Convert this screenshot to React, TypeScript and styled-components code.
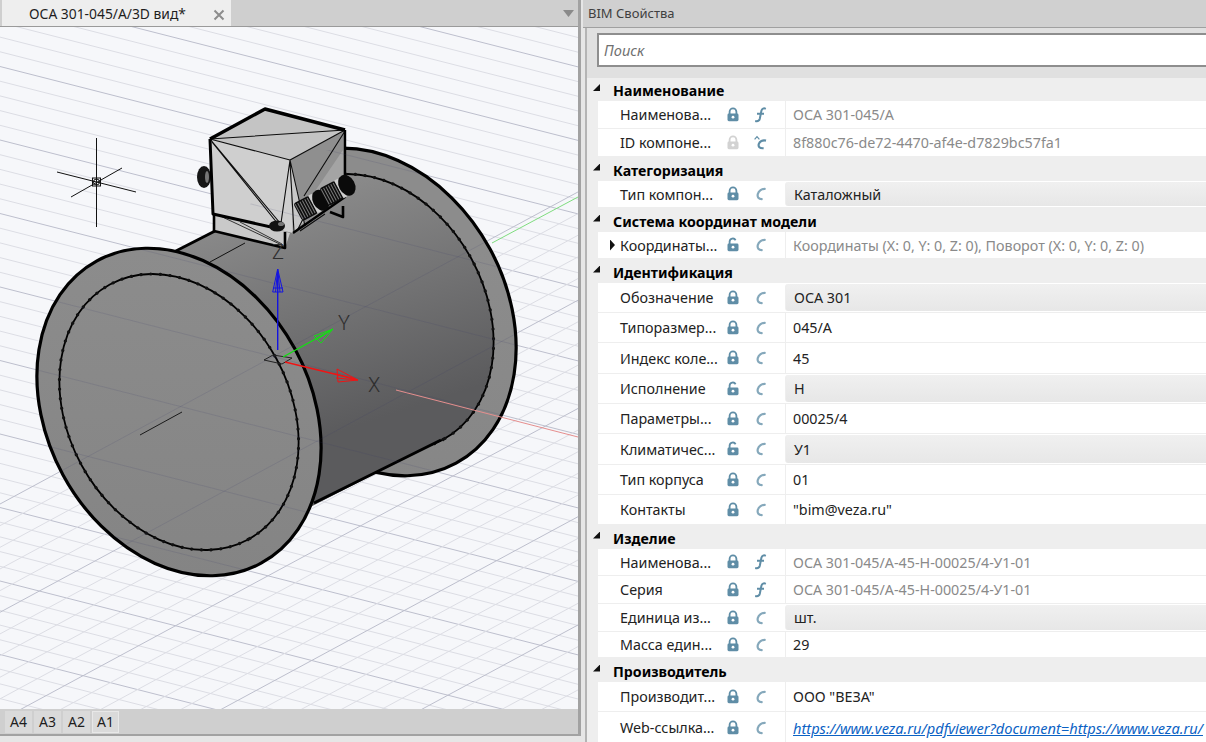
import React from 'react';
import styled, { createGlobalStyle } from 'styled-components';

const GlobalStyle = createGlobalStyle`
  html, body {
    margin: 0;
    padding: 0;
    background: #e6e6e6;
  }
  * { box-sizing: border-box; }
`;

const Screen = styled.div`
  width: 1206px;
  height: 742px;
  overflow: hidden;
  display: flex;
  background: #e6e6e6;
  font-family: "Noto Sans", "Open Sans", sans-serif;
  font-size: 14.3px;
  color: #1e1e1e;
`;

// left pane
const DrawingPane = styled.section`
  width: 581px;
  height: 736px;
  display: flex;
  flex-direction: column;
  flex-shrink: 0;
  border-right: 3px solid #a2a2a2;
  border-bottom: 2px solid #a2a2a2;
`;

const TabBar = styled.div`
  height: 27px;
  flex-shrink: 0;
  display: flex;
  align-items: stretch;
  justify-content: space-between;
  background: #cfcfcf;
  border-bottom: 1px solid #9a9a9a;
  padding: 0 4px 0 2px;
`;

const ActiveTab = styled.div`
  width: 229px;
  display: flex;
  align-items: center;
  justify-content: space-between;
  background: #eeeeee;
  padding: 0 6px 0 27px;
  font-size: 13.85px;
`;

const CloseIcon = styled.svg`
  width: 12px;
  height: 12px;
  margin-top: 3px;
  stroke: #8c8c8c;
  stroke-width: 2;
`;

const TabMenu = styled.span`
  align-self: center;
  width: 11px;
  height: 7px;
  background: #8a8a8a;
  clip-path: polygon(0 0, 100% 0, 50% 100%);
  margin-top: 1px;
`;

const Viewport = styled.div`
  flex: 1;
  min-height: 0;
  background: #f6f7fa;
  svg { display: block; }
`;

const SheetBar = styled.div`
  height: 25px;
  flex-shrink: 0;
  display: flex;
  align-items: center;
  gap: 2px;
  padding: 0 5px;
  background: #cfcfcf;
`;

const SheetTab = styled.div<{ $active?: boolean }>`
  width: 27px;
  height: 22px;
  display: flex;
  align-items: center;
  justify-content: center;
  background: #dadada;
  font-size: 14px;
  border: 1px solid ${p => (p.$active ? '#e8e8e8' : '#dadada')};
`;

// right pane
const PropsPane = styled.section`
  flex: 1;
  min-width: 0;
  display: flex;
  flex-direction: column;
  height: 742px;
  padding-left: 2px;
`;

const PropsTitle = styled.div`
  height: 28px;
  flex-shrink: 0;
  display: flex;
  align-items: center;
  padding: 0 0 2px 5px;
  background: #d0d0d0;
  border-bottom: 1px solid #a0a0a0;
  font-size: 13px;
  color: #404040;
`;

const PropsBody = styled.div`
  flex: 1;
  min-height: 0;
  overflow: hidden;
  background: #eeeeee;
  border-left: 2px solid #b4b4b4;
  margin-left: 2px;
`;

const SearchBar = styled.div`
  height: 50px;
  padding: 5px 0 0 10px;
  background: #e0e0e0;
`;

const SearchInput = styled.div`
  height: 34px;
  border: 2px solid #8e8e8e;
  border-right: none;
  background: #fff;
  display: flex;
  align-items: center;
  padding-left: 5px;
  font-style: italic;
  color: #707070;
  font-size: 14.6px;
`;

const GroupHead = styled.div<{ $h: number }>`
  height: ${p => p.$h}px;
  display: flex;
  align-items: center;
  padding: 2px 0 0 6px;
  font-weight: 700;
  font-size: 14.2px;
  color: #000;
  gap: 13px;
`;

const Collapse = styled.span`
  width: 7px;
  height: 7px;
  background: #111;
  clip-path: polygon(100% 0, 100% 100%, 0 100%);
  margin-top: -6px;
`;

const Row = styled.div<{ $h: number }>`
  height: ${p => p.$h}px;
  margin-left: 11px;
  display: flex;
  background: #fff;
  border-bottom: 1px solid #eeeeee;
`;

const NameCell = styled.div`
  width: 186px;
  flex-shrink: 0;
  display: grid;
  grid-template-columns: 22px 106px 27px 14px;
  align-items: center;
`;

const Expander = styled.span`
  justify-self: end;
  margin-right: 5px;
  width: 5px;
  height: 11px;
  background: #111;
  clip-path: polygon(0 0, 100% 50%, 0 100%);
`;

const Name = styled.span`
  white-space: nowrap;
  color: #222;
`;

const IconSvg = styled.svg`
  display: block;
  width: 14px;
  height: 16px;
`;

const ValueCell = styled.div<{ $combo?: boolean; $muted?: boolean }>`
  flex: 1;
  min-width: 0;
  margin-left: 1px;
  border-left: 1px solid #eeeeee;
  display: flex;
  align-items: center;
  white-space: nowrap;
  overflow: hidden;
  padding-left: ${p => (p.$combo ? '8px' : '7px')};
  color: ${p => (p.$muted ? '#8a8a8a' : '#222')};
  ${p =>
    p.$combo &&
    `
    margin-top: 1px;
    margin-bottom: 1px;
    border-radius: 3px 0 0 3px;
    background: linear-gradient(180deg, #f0f0f0 0%, #e7e7e7 100%);
  `}
`;

const WebLink = styled.a`
  color: #0b62c4;
  font-style: italic;
  font-size: 14.6px;
  text-decoration: underline;
`;

const LockIcon = ({ open, faded }: { open?: boolean; faded?: boolean }) => (
  <IconSvg viewBox="0 0 14 16">
    <path
      d={open ? 'M3.6 7V4.6a3.2 3.2 0 0 1 6-1.4' : 'M3.6 7V4.8a3.4 3.4 0 0 1 6.8 0V7'}
      fill="none"
      stroke={faded ? '#d2d2d2' : '#5f8da6'}
      strokeWidth="1.8"
    />
    <rect x="1.5" y="6.6" width="11" height="7.6" rx="1.4" fill={faded ? '#d2d2d2' : '#5f8da6'} />
    <circle cx="7" cy="10.2" r="1.4" fill="#fff" />
  </IconSvg>
);

const ValueKindIcon = ({ kind }: { kind: 'f' | 'c' | 'hat' }) => {
  if (kind === 'f') {
    return (
      <IconSvg viewBox="0 0 14 16">
        <path
          d="M12.8 1.8c-2-1-3.8-.3-4.4 2L6.8 11.8c-.5 2-1.8 2.8-4.6 2.2M4 6.8h7"
          fill="none"
          stroke="#5f8da6"
          strokeWidth="2"
        />
      </IconSvg>
    );
  }
  return (
    <IconSvg viewBox="0 0 14 16">
      <path
        d={
          kind === 'hat'
            ? 'M13 5.6C9.6 4.6 6.6 6.4 5.8 9c-.7 2.6.6 4.6 4.8 4.2'
            : 'M12.6 3C8.8 2.4 5.6 4.8 4.8 8c-.7 3 .6 5.4 4.8 5'
        }
        fill="none"
        stroke={kind === 'hat' ? '#5f8da6' : '#85a8bb'}
        strokeWidth="2.2"
      />
      {kind === 'hat' && <path d="M1.6 4.4 4 1.6 6.4 4.4" fill="none" stroke="#5f8da6" strokeWidth="1.2" />}
    </IconSvg>
  );
};

type Prop = {
  name: string;
  value: string;
  h: number;
  kind?: 'f' | 'c' | 'hat';
  combo?: boolean;
  muted?: boolean;
  open?: boolean;
  faded?: boolean;
  expand?: boolean;
  link?: boolean;
};

type Group = { title: string; h: number; rows: Prop[] };

const groups: Group[] = [
  {
    title: 'Наименование',
    h: 23,
    rows: [
      { name: 'Наименова...', value: 'ОСА 301-045/А', h: 28, kind: 'f', muted: true },
      { name: 'ID компоне...', value: '8f880c76-de72-4470-af4e-d7829bc57fa1', h: 28, kind: 'hat', muted: true, faded: true },
    ],
  },
  {
    title: 'Категоризация',
    h: 24,
    rows: [{ name: 'Тип компон...', value: 'Каталожный', h: 27, combo: true }],
  },
  {
    title: 'Система координат модели',
    h: 24,
    rows: [
      {
        name: 'Координаты...',
        value: 'Координаты (X: 0, Y: 0, Z: 0), Поворот (X: 0, Y: 0, Z: 0)',
        h: 27,
        muted: true,
        open: true,
        expand: true,
      },
    ],
  },
  {
    title: 'Идентификация',
    h: 24,
    rows: [
      { name: 'Обозначение', value: 'ОСА 301', h: 30, combo: true },
      { name: 'Типоразмер...', value: '045/А', h: 30 },
      { name: 'Индекс коле...', value: '45', h: 31 },
      { name: 'Исполнение', value: 'Н', h: 30, combo: true, open: true },
      { name: 'Параметры...', value: '00025/4', h: 30 },
      { name: 'Климатичес...', value: 'У1', h: 31, combo: true, open: true },
      { name: 'Тип корпуса', value: '01', h: 30 },
      { name: 'Контакты', value: '"bim@veza.ru"', h: 30 },
    ],
  },
  {
    title: 'Изделие',
    h: 24,
    rows: [
      { name: 'Наименова...', value: 'ОСА 301-045/А-45-Н-00025/4-У1-01', h: 27, kind: 'f', muted: true },
      { name: 'Серия', value: 'ОСА 301-045/А-45-Н-00025/4-У1-01', h: 28, kind: 'f', muted: true },
      { name: 'Единица из...', value: 'шт.', h: 28, combo: true },
      { name: 'Масса един...', value: '29', h: 26 },
    ],
  },
  {
    title: 'Производитель',
    h: 24,
    rows: [
      { name: 'Производит...', value: 'ООО "ВЕЗА"', h: 30 },
      {
        name: 'Web-ссылка...',
        value: 'https://www.veza.ru/pdfviewer?document=https://www.veza.ru/',
        h: 32,
        link: true,
      },
    ],
  },
];

// construction grid of the 3D view, in page pixels
const gridLines = (() => {
  const out: { x1: number; y1: number; x2: number; y2: number; major: boolean }[] = [];
  for (let i = -10; i <= 60; i++) {
    const y0 = 654.5 - 14.7 * i;
    out.push({ x1: 0, y1: y0, x2: 578, y2: y0 + 578 * 0.255, major: i % 5 === 0 });
  }
  for (let i = -10; i <= 50; i++) {
    const x0 = 19.5 + 40.1 * i;
    out.push({ x1: x0, y1: 710, x2: x0 + 1265, y2: 27, major: i % 5 === 0 });
  }
  return out;
})();

// tilted ellipse as a path, so gradients stay in page coordinates
const TILT = 61.5;
const ellipsePath = (cx: number, cy: number, rx: number, ry: number) => {
  const dx = rx * Math.cos((TILT * Math.PI) / 180);
  const dy = rx * Math.sin((TILT * Math.PI) / 180);
  const arc = `A${rx} ${ry} ${TILT} 1 1`;
  return `M${cx + dx} ${cy + dy}${arc} ${cx - dx} ${cy - dy}${arc} ${cx + dx} ${cy + dy}Z`;
};

const Flange = ({ cx, cy, front }: { cx: number; cy: number; front?: boolean }) => (
  <g>
    <path d={ellipsePath(cx, cy, 172, 132)} fill="url(#flange)" stroke="#000" strokeWidth="3.2" />
    <path d={ellipsePath(cx, cy, 145, 111)} fill={front ? 'url(#flange)' : 'url(#tube)'} stroke="#000" strokeWidth="1.8" />
    <path
      d={ellipsePath(cx, cy, 145, 111)}
      fill="none"
      stroke="#111"
      strokeWidth="3.2"
      strokeLinecap="round"
      strokeDasharray="0.1 9.6"
    />
  </g>
);

const Knob = ({ x, y }: { x: number; y: number }) => (
  <g transform={`translate(${x} ${y}) rotate(-28)`}>
    <rect x="-16" y="-10" width="18" height="20" rx="3" fill="#0d0d0d" />
    <line x1="-15" y1="0" x2="2" y2="0" stroke="#7a7a7a" strokeWidth="17" strokeDasharray="1 1.7" />
    <rect x="1" y="-10" width="4" height="20" fill="#cdcdcd" />
    <ellipse cx="10" rx="8" ry="11" fill="#0a0a0a" />
  </g>
);

const HousingBox = () => (
  <g strokeLinejoin="round">
    <ellipse cx="204" cy="177" rx="7" ry="11" fill="#161616" />
    <ellipse cx="207" cy="177" rx="2" ry="6" fill="#777" />
    <polygon points="214,213 290,233 285,248 214,231" fill="#c9c9c9" />
    <path d="M214 231 285 248V232M214 213v18" fill="none" stroke="#000" strokeWidth="2.6" />
    <path d="M216 214 284 246M240 222 282 244" stroke="#222" strokeWidth="0.9" fill="none" />
    <polygon points="210,139 290,160 293,233 213,214" fill="#cfcfcf" />
    <polygon points="210,139 265,109 345,130 290,160" fill="#c4c4c4" />
    <polygon points="290,160 345,130 344,196 293,233" fill="#8f8f8f" />
    <polygon points="290,160 304,222 293,233" fill="#c8c8c8" />
    <polygon points="309,200 343,150 343,180 312,212" fill="#a4a4a4" />
    <path
      d="M210 139 345 130M210 139 290 160M345 130 290 160M210 139 280 223M212 142 278 224M290 160 281 223M290 160 305 226M290 162 294 232M345 131 304 196M297 231 310 205M300 231 325 214"
      fill="none"
      stroke="#0c0c0c"
      strokeWidth="1.1"
    />
    <path d="M210 139 265 109 345 130" fill="none" stroke="#000" strokeWidth="3.4" />
    <path d="M210 139 213 214 280 229" fill="none" stroke="#000" strokeWidth="3" />
    <path d="M345 130V197L293 233" fill="none" stroke="#000" strokeWidth="2.4" />
    <path d="M330 212 343 217V206" fill="none" stroke="#000" strokeWidth="2.6" />
    <Knob x={312} y={205} />
    <Knob x={338} y={190} />
    <ellipse cx="277" cy="226" rx="8" ry="5.5" fill="#121212" />
    <ellipse cx="281" cy="224" rx="3" ry="2" fill="#777" />
  </g>
);

const AxisLabel = styled.text`
  font-family: Roboto, "Liberation Sans", sans-serif;
  font-size: 20px;
  font-weight: 300;
  text-anchor: middle;
  fill: #2e2e2e;
  stroke: none;
`;

const Axes = () => (
  <g fill="none" strokeWidth="1">
    <path d="M264 360 273 355 292 358 282 364Z" stroke="#222" />
    <line x1="277.7" y1="350" x2="277.7" y2="272" stroke="#1414e0" strokeWidth="1.4" />
    <path d="M277.7 269 272.7 292 283 292ZM277.7 269 275.5 292M277.7 269 280 292M273 288 283 288" stroke="#1414e0" />
    <line x1="283" y1="357" x2="330" y2="331" stroke="#12e012" strokeWidth="1.4" />
    <path d="M333 329 314 336 321 343ZM333 329 316 340M333 329 318 338" stroke="#12e012" />
    <line x1="285" y1="362" x2="355" y2="379" stroke="#f01414" strokeWidth="1.4" />
    <path d="M358 380 337 369 338 382ZM358 380 335 374M358 380 336 378" stroke="#f01414" />
    <AxisLabel x={344} y={330}>Y</AxisLabel>
    <AxisLabel x={374} y={392}>X</AxisLabel>
    <AxisLabel x={278} y={259}>Z</AxisLabel>
  </g>
);

const Crosshair = () => (
  <g stroke="#111" strokeWidth="1" fill="none">
    <line x1="96.5" y1="138" x2="96.5" y2="227" />
    <line x1="57" y1="172" x2="136" y2="192" />
    <line x1="71" y1="197" x2="122" y2="168" />
    <rect x="92.5" y="178" width="8" height="8" />
    <circle cx="96.5" cy="182" r="3" />
  </g>
);

const Scene = () => (
  <svg width="578" height="683" viewBox="0 27 578 683">
    <defs>
      <linearGradient id="tube" gradientUnits="userSpaceOnUse" x1="300" y1="190" x2="375" y2="420">
        <stop offset="0" stopColor="#8b8b8b" />
        <stop offset="1" stopColor="#5b5b5d" />
      </linearGradient>
      <linearGradient id="flange" gradientUnits="userSpaceOnUse" x1="180" y1="250" x2="180" y2="580">
        <stop offset="0" stopColor="#8c8c8c" />
        <stop offset="1" stopColor="#848484" />
      </linearGradient>
      {/* the floor grid shows faintly through the lower half of the model */}
      <clipPath id="modelShade">
        <path d={ellipsePath(179, 412, 171, 131)} />
        <path d={ellipsePath(374, 312, 171, 131)} />
        <polygon points="112,284 307,184 441,440 246,540" />
      </clipPath>
    </defs>

    {gridLines.map((l, i) => (
      <line
        key={i}
        x1={l.x1}
        y1={l.y1}
        x2={l.x2}
        y2={l.y2}
        stroke={l.major ? '#bdbfcd' : '#dcdde4'}
        strokeWidth="1"
      />
    ))}

    <line x1="492" y1="243" x2="578" y2="197" stroke="#7fdc7f" strokeWidth="1" />

    <Flange cx={374} cy={312} />
    <polygon points="112,284 307,184 441,440 246,540" fill="url(#tube)" />
    <path d="M172 253 215 231M314 503 441 440" stroke="#000" strokeWidth="3" fill="none" />
    <line x1="210" y1="262" x2="245" y2="243" stroke="#111" strokeWidth="1" />
    <HousingBox />

    <line x1="396" y1="390" x2="578" y2="437" stroke="#e58e8e" strokeWidth="1" />

    <Flange cx={179} cy={412} front />
    <line x1="140" y1="435" x2="182" y2="412" stroke="#1a1a1a" strokeWidth="1" />

    <g clipPath="url(#modelShade)">
      {gridLines
        .filter(l => l.major)
        .map((l, i) => (
          <line
            key={i}
            x1={l.x1}
            y1={l.y1}
            x2={l.x2}
            y2={l.y2}
            stroke="#3c3c6a"
            strokeOpacity="0.14"
            strokeWidth="1"
          />
        ))}
    </g>

    <Axes />
    <Crosshair />
  </svg>
);

const App: React.FC = () => (
  <>
    <GlobalStyle />
    <Screen>
      <DrawingPane>
        <TabBar>
          <ActiveTab>
            <span>ОСА 301-045/А/3D вид*</span>
            <CloseIcon viewBox="0 0 12 12">
              <path d="M1.5 1.5 10.5 10.5M10.5 1.5 1.5 10.5" />
            </CloseIcon>
          </ActiveTab>
          <TabMenu />
        </TabBar>
        <Viewport>
          <Scene />
        </Viewport>
        <SheetBar>
          <SheetTab>A4</SheetTab>
          <SheetTab>A3</SheetTab>
          <SheetTab>A2</SheetTab>
          <SheetTab $active>A1</SheetTab>
        </SheetBar>
      </DrawingPane>

      <PropsPane>
        <PropsTitle>BIM Свойства</PropsTitle>
        <PropsBody>
          <SearchBar>
            <SearchInput>Поиск</SearchInput>
          </SearchBar>
          {groups.map(group => (
            <React.Fragment key={group.title}>
              <GroupHead $h={group.h}>
                <Collapse />
                {group.title}
              </GroupHead>
              {group.rows.map(row => (
                <Row key={row.name + row.value} $h={row.h}>
                  <NameCell>
                    {row.expand ? <Expander /> : <span />}
                    <Name>{row.name}</Name>
                    <LockIcon open={row.open} faded={row.faded} />
                    <ValueKindIcon kind={row.kind ?? 'c'} />
                  </NameCell>
                  <ValueCell $combo={row.combo} $muted={row.muted}>
                    {row.link ? <WebLink>{row.value}</WebLink> : row.value}
                  </ValueCell>
                </Row>
              ))}
            </React.Fragment>
          ))}
        </PropsBody>
      </PropsPane>
    </Screen>
  </>
);

export default App;
